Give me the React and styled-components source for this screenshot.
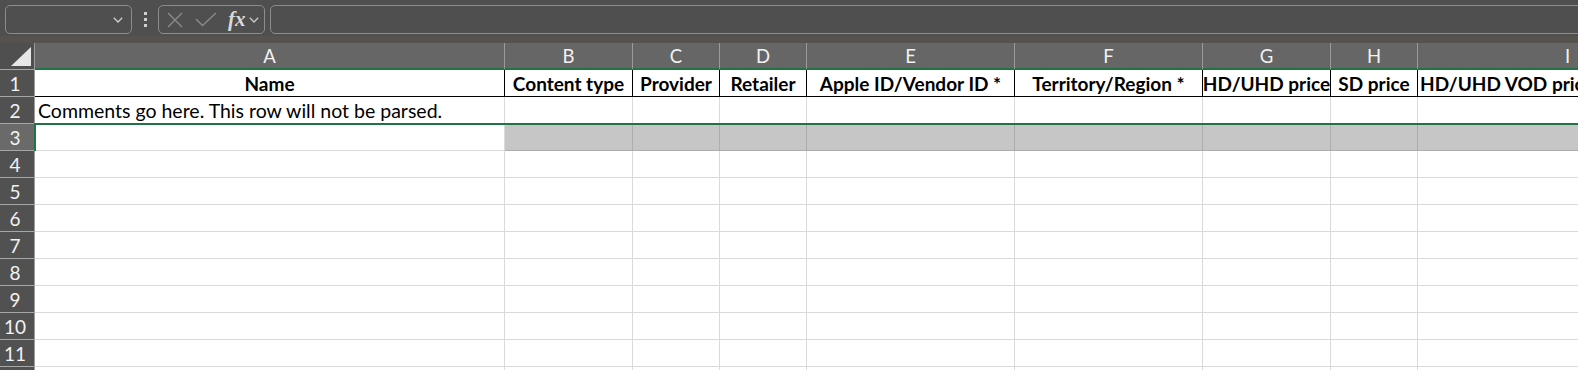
import React from 'react';
import styled, { createGlobalStyle } from 'styled-components';

const GlobalStyle = createGlobalStyle`
    html, body {
        margin: 0;
        padding: 0;
        background: #ffffff;
        overflow: hidden;
    }
`

const GREEN = '#217346'
const FONT = `Lato, "Liberation Sans", sans-serif`

const columns = [
    { key: 'A', width: 470, title: 'Name' },
    { key: 'B', width: 128, title: 'Content type' },
    { key: 'C', width: 87, title: 'Provider' },
    { key: 'D', width: 87, title: 'Retailer' },
    { key: 'E', width: 208, title: 'Apple ID/Vendor ID *' },
    { key: 'F', width: 188, title: 'Territory/Region *' },
    { key: 'G', width: 128, title: 'HD/UHD price' },
    { key: 'H', width: 87, title: 'SD price' },
    { key: 'I', width: 300, title: 'HD/UHD VOD price', align: 'left' },
]

const template = `35px ${columns.map(c => c.width + 'px').join(' ')}`

const Wrapper = styled.div`
    width: 1578px;
    height: 370px;
    overflow: hidden;
    display: flex;
    flex-direction: column;
    font-family: ${FONT};
    & > * {
        flex-shrink: 0;
    }
`

const Toolbar = styled.div`
    height: 36px;
    box-sizing: border-box;
    padding: 5px 0 2px 5px;
    background-color: #4f4f4f;
    display: flex;
    align-items: stretch;
    overflow: hidden;
`
const Strip = styled.div`
    height: 7px;
    background-color: #56534f;
`
const Box = styled.div`
    box-sizing: border-box;
    flex-shrink: 0;
    border: 1px solid #8c8c8c;
    border-radius: 5px;
    display: flex;
    align-items: center;
`
const NameBox = styled(Box)`
    width: 127px;
    justify-content: flex-end;
    padding-right: 8px;
`
const Dots = styled.div`
    width: 26px;
    display: flex;
    flex-direction: column;
    align-items: center;
    justify-content: center;
    gap: 3px;
    span {
        width: 3px;
        height: 3px;
        background: #cfcfcf;
    }
`
const FxBox = styled(Box)`
    width: 107px;
    padding-left: 8px;
`
const FxText = styled.span`
    font-family: "Liberation Serif", serif;
    font-style: italic;
    font-weight: bold;
    font-size: 21px;
    line-height: 1;
    color: #d9d9d9;
    margin-left: 11px;
    margin-right: 3px;
`
const FormulaInput = styled(Box)`
    flex: 1;
    margin-left: 5px;
    margin-right: -10px;
`

const Sheet = styled.div`
    display: flex;
    flex-direction: column;
`
const Row = styled.div`
    display: grid;
    grid-template-columns: ${template};
    height: 27px;
    flex-shrink: 0;
    position: relative;

    ${p => p.$selected && `
        &::after {
            content: '';
            position: absolute;
            left: 34px;
            right: -6px;
            top: -1px;
            bottom: -2px;
            border: 2px solid ${GREEN};
            pointer-events: none;
        }
    `}
`
const Corner = styled.div`
    background: #4f4f4f;
    border-right: 1px solid #9c9c9c;
    border-bottom: 1px solid #a6a6a6;
    position: relative;
    svg {
        position: absolute;
        left: 11px;
        top: 4px;
    }
`
const ColHead = styled.div`
    background: #666666;
    color: #f2f2f2;
    font-size: 18.5px;
    display: flex;
    align-items: center;
    justify-content: center;
    border-right: 1px solid #9a9a9a;
    border-bottom: 2px solid ${GREEN};
    padding-top: 1px;
`
const RowHead = styled.div`
    background: ${p => p.$selected ? '#6a6a6a' : '#515151'};
    color: #f2f2f2;
    font-size: 19px;
    display: flex;
    align-items: center;
    justify-content: center;
    border-right: 1px solid #9c9c9c;
    border-bottom: 1px solid #a6a6a6;
    padding-right: 4px;
`
const Cell = styled.div`
    box-sizing: border-box;
    font-size: ${p => p.$bold ? '19px' : '19.5px'};
    font-weight: ${p => p.$bold ? 700 : 400};
    color: #000;
    white-space: nowrap;
    overflow: hidden;
    display: flex;
    align-items: center;
    justify-content: ${p => p.$align === 'left' ? 'flex-start' : 'center'};
    padding: 0 2px;
    background: ${p => p.$shade ? '#c6c6c6' : '#fff'};
    border-right: 1px solid ${p => p.$line || '#dadada'};
    border-bottom: 1px solid ${p => p.$line || '#dadada'};
`
const LongCell = styled(Cell)`
    overflow: visible;
    padding-left: 3px;
`

const Chevron = ({ w = 10, color = '#d0d0d0' }) => (
    <svg width={w} height={w * 0.6} viewBox="0 0 10 6">
        <path d="M0.8 0.8 L5 5 L9.2 0.8" fill="none" stroke={color} strokeWidth="1.3" />
    </svg>
)

function FormulaBar() {
    return (
        <>
            <Toolbar>
                <NameBox><Chevron /></NameBox>
                <Dots><span /><span /><span /></Dots>
                <FxBox>
                    <svg width="16" height="16" viewBox="0 0 16 16">
                        <path d="M1 1 L15 15 M15 1 L1 15" stroke="#8a8a8a" strokeWidth="1.4" />
                    </svg>
                    <svg width="22" height="16" viewBox="0 0 22 16" style={{ marginLeft: 12 }}>
                        <path d="M1 7 L7.5 13.5 L21 1" fill="none" stroke="#8a8a8a" strokeWidth="1.4" />
                    </svg>
                    <FxText>fx</FxText>
                    <Chevron w={10} color="#c8c8c8" />
                </FxBox>
                <FormulaInput />
            </Toolbar>
            <Strip />
        </>
    )
}

export default function App() {
    const emptyRows = [4, 5, 6, 7, 8, 9, 10, 11, 12]
    return (
        <Wrapper>
            <GlobalStyle />
            <FormulaBar />
            <Sheet>
                <Row>
                    <Corner>
                        <svg width="20" height="19" viewBox="0 0 20 19">
                            <polygon points="20,0 20,19 0,19" fill="#e6e6e6" />
                        </svg>
                    </Corner>
                    {columns.map(c => <ColHead key={c.key}>{c.key}</ColHead>)}
                </Row>
                <Row>
                    <RowHead>1</RowHead>
                    {columns.map(c => (
                        <Cell key={c.key} $bold $line="#000" $align={c.align}>{c.title}</Cell>
                    ))}
                </Row>
                <Row>
                    <RowHead>2</RowHead>
                    <LongCell $align="left">Comments go here. This row will not be parsed.</LongCell>
                    {columns.slice(1).map(c => <Cell key={c.key} />)}
                </Row>
                <Row $selected>
                    <RowHead $selected>3</RowHead>
                    <Cell />
                    {columns.slice(1).map(c => <Cell key={c.key} $shade $line="#adadad" />)}
                </Row>
                {emptyRows.map(n => (
                    <Row key={n}>
                        <RowHead>{n}</RowHead>
                        {columns.map(c => <Cell key={c.key} />)}
                    </Row>
                ))}
            </Sheet>
        </Wrapper>
    )
}
